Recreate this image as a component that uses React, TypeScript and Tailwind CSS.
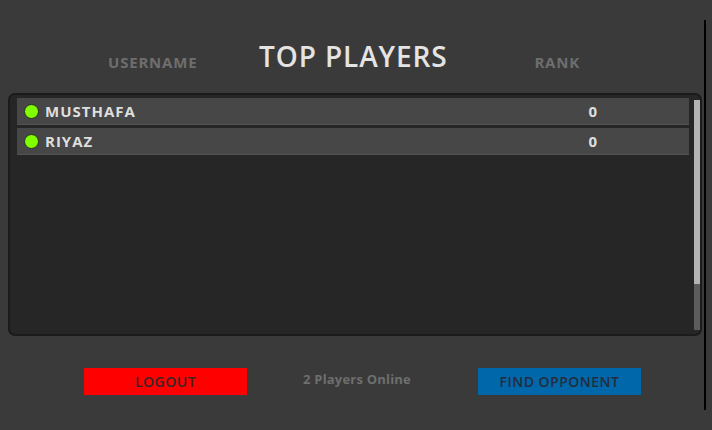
import React from 'react';

const players = [
  { name: 'MUSTHAFA', rank: 0 },
  { name: 'RIYAZ', rank: 0 },
];

function PlayerRow({ name, rank }: { name: string; rank: number }) {
  return (
    <div className="flex h-[27px] items-center bg-[#474747] border-b border-[#525252] mb-[3px]">
      <span className="ml-[7px] h-[15px] w-[15px] rounded-full bg-[#7fff00] border border-[#2a2a2a]" />
      <span className="ml-[6px] text-[15px] font-bold tracking-[1px] text-[#dedede]">{name}</span>
      <span className="ml-auto mr-[92px] text-[15px] font-bold text-[#dedede]">{rank}</span>
    </div>
  );
}

export default function App() {
  return (
    <div
      className="w-[712px] h-[430px] overflow-hidden bg-[#3a3a3a] pt-[20px]"
      style={{ fontFamily: '"Open Sans", "Noto Sans", sans-serif' }}
    >
      <div className="w-[706px] h-[390px] border-r-2 border-black">
        {/* header */}
        <div className="flex items-end h-[50px]">
          <span className="ml-[108px] w-[91px] text-[15px] font-bold tracking-[0.8px] text-[#6e6e6e] leading-none">USERNAME</span>
          <span className="ml-[60px] text-[28px] font-semibold tracking-[0.9px] text-[#e4e4e4] leading-none">TOP PLAYERS</span>
          <span className="ml-auto mr-[124px] text-[15px] font-bold tracking-[0.8px] text-[#6e6e6e] leading-none">RANK</span>
        </div>

        {/* list panel */}
        <div className="mt-[23px] ml-[8px] mr-[2px] h-[243px] rounded-[7px] border-2 border-[#1b1b1b] bg-[#262626] flex pt-[3px] pl-[7px]">
          <div className="flex-1">
            {players.map((p) => (
              <PlayerRow key={p.name} name={p.name} rank={p.rank} />
            ))}
          </div>
          <div className="ml-[5px] mt-[2px] w-[6px] h-[230px] flex flex-col">
            <div className="h-[184px] bg-[#b4b4b4]" />
            <div className="flex-1 bg-[#5c5c5c]" />
          </div>
        </div>

        {/* footer */}
        <div className="flex items-center mt-[32px]">
          <button className="ml-[84px] w-[163px] h-[27px] bg-[#ff0000] text-[14px] font-semibold text-[#3a2626] tracking-[0.5px]">
            LOGOUT
          </button>
          <span className="ml-[52px] w-[116px] text-center text-[13px] font-bold tracking-[0.2px] text-[#6e6e6e] -mt-[4px]">2 Players Online</span>
          <button className="ml-[63px] w-[163px] h-[27px] bg-[#0068aa] text-[14px] font-semibold text-[#232c3a] tracking-[0.5px]">
            FIND OPPONENT
          </button>
        </div>
      </div>
    </div>
  );
}
